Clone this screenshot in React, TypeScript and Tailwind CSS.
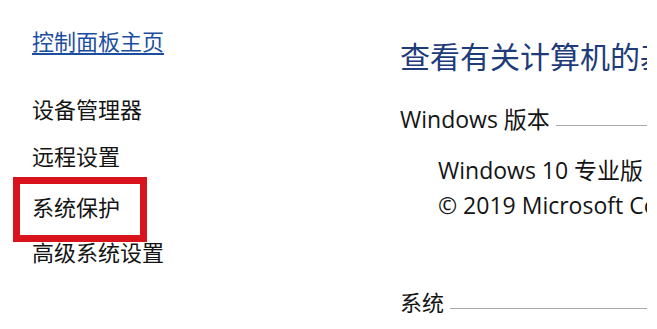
import React from 'react';

const font = { fontFamily: '"Open Sans", "Noto Sans CJK SC", sans-serif' };

function SectionTitle({ label, className }: { label: string; className?: string }) {
  return (
    <div className={`flex items-center ${className ?? ''}`}>
      <span className="shrink-0">{label}</span>
      <div className="flex-1 h-px bg-[#a9a9a9] ml-[6px] mt-[12px]" />
    </div>
  );
}

export default function App() {
  return (
    <div
      className="w-[657px] h-[329px] bg-white flex overflow-hidden text-[#141414]"
      style={font}
    >
      {/* left nav */}
      <div className="w-[400px] shrink-0 pl-[32px] pt-[26px] flex flex-col text-[22px] leading-[30px]">
        <a className="text-[#1c4ea0] underline decoration-[1.5px] underline-offset-[3px] self-start">
          控制面板主页
        </a>
        <span className="mt-[38px]">设备管理器</span>
        <span className="mt-[17px]">远程设置</span>
        <div className="relative mt-[21px] self-start">
          <span>系统保护</span>
          <div className="absolute left-[-19px] top-[-15px] w-[134px] h-[65px] border-[7px] border-[#d9131c]" />
        </div>
        <span className="mt-[15px]">高级系统设置</span>
      </div>

      {/* main content, clipped at the window edge */}
      <div className="w-[247px] shrink-0 overflow-hidden whitespace-nowrap">
        <h1 className="mt-[37px] text-[30px] leading-[40px] text-[#1e3b7a]">查看有关计算机的基本信息</h1>
        <SectionTitle label="Windows 版本" className="mt-[27px] text-[23px] leading-[30px]" />
        <div className="pl-[38px] text-[23px] leading-[30px]">
          <div className="mt-[21px]">Windows 10 专业版</div>
          <div className="mt-[5px]">© 2019 Microsoft Corporation。保留所有权利。</div>
        </div>
        <SectionTitle label="系统" className="mt-[67px] text-[22px] leading-[30px]" />
      </div>
    </div>
  );
}
